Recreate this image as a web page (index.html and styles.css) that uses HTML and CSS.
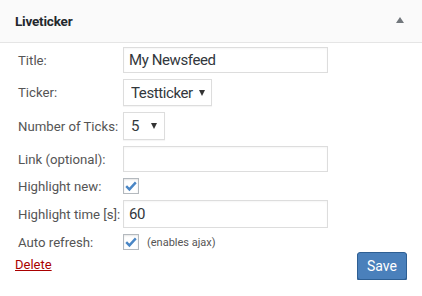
FILE: index.html
```html
<!DOCTYPE html>
<html lang="en">
<head>
  <meta charset="UTF-8">
  <meta name="viewport" content="width=device-width, initial-scale=1.0">
  <title>Liveticker Widget</title>
  <link rel="stylesheet" href="styles.css">
</head>
<body>
  <div class="widget">
    <div class="widget-top">
      <h3>Liveticker</h3>
      <span class="toggle"></span>
    </div>

    <form class="widget-inside">
      <div class="fields">
        <label for="title">Title:</label>
        <input type="text" id="title" class="wide" value="My Newsfeed">

        <label for="ticker">Ticker:</label>
        <span class="select-wrap ticker">
          <select id="ticker"><option>Testticker</option></select>
          <span class="arrow"></span>
        </span>

        <label for="limit">Number of Ticks:</label>
        <span class="select-wrap limit">
          <select id="limit"><option>5</option></select>
          <span class="arrow"></span>
        </span>

        <label for="link">Link (optional):</label>
        <input type="text" id="link" class="wide" value="">

        <label for="highlight">Highlight new:</label>
        <span class="check-row">
          <span class="checkbox"><svg viewBox="0 0 16 16" width="16" height="16"><path d="M3.2 8.2 L6.4 11.4 L12.8 4.4" fill="none" stroke="#4a86c5" stroke-width="2.4"/></svg></span>
        </span>

        <label for="htime">Highlight time [s]:</label>
        <input type="text" id="htime" class="wide tall" value="60">

        <label for="ajax">Auto refresh:</label>
        <span class="check-row">
          <span class="checkbox"><svg viewBox="0 0 16 16" width="16" height="16"><path d="M3.2 8.2 L6.4 11.4 L12.8 4.4" fill="none" stroke="#4a86c5" stroke-width="2.4"/></svg></span>
          <small>(enables ajax)</small>
        </span>
      </div>

      <div class="widget-control">
        <a href="#" class="delete">Delete</a>
        <button type="button" class="save">Save</button>
      </div>
    </form>
  </div>
</body>
</html>
```

FILE: styles.css
```css
body {
  margin: 0;
  font-family: Roboto, "Liberation Sans", Arial, sans-serif;
  background: #fff;
}
.widget {
  width: 422px;
}
.widget-top {
  display: flex;
  align-items: center;
  justify-content: space-between;
  height: 43px;
  padding: 0 18px 0 15px;
  background: #fafafa;
  border-bottom: 1px solid #e5e5e5;
  box-sizing: border-box;
}
.widget-top h3 {
  margin: 0;
  font-size: 13.5px;
  font-weight: bold;
  color: #23282d;
  letter-spacing: -0.2px;
}
.toggle {
  width: 0;
  height: 0;
  border-left: 4px solid transparent;
  border-right: 4px solid transparent;
  border-bottom: 6px solid #72777c;
  margin-top: -2px;
}
.widget-inside {
  padding: 4px 15px 0 18px;
}
.fields {
  display: grid;
  grid-template-columns: 105px auto;
  row-gap: 6px;
  align-items: center;
  justify-items: start;
}
.fields label {
  font-size: 13.2px;
  color: #555;
}
input.wide {
  width: 205px;
  height: 26px;
  box-sizing: border-box;
  margin: 0;
  padding: 0 5px;
  border: 1px solid #ddd;
  box-shadow: inset 0 1px 2px rgba(0, 0, 0, 0.04);
  font-family: inherit;
  font-size: 15px;
  letter-spacing: -0.4px;
  color: #32373c;
}
input.tall {
  height: 28px;
}
.select-wrap {
  position: relative;
  display: inline-block;
}
.select-wrap select {
  appearance: none;
  -webkit-appearance: none;
  height: 27px;
  margin: 0;
  padding: 0 7px;
  border: 1px solid #ddd;
  background: #fff;
  font-family: inherit;
  font-size: 15px;
  letter-spacing: -0.4px;
  color: #32373c;
  box-shadow: 0 1px 1px rgba(0, 0, 0, 0.04);
}
.ticker select {
  width: 89px;
}
.limit select {
  width: 42px;
  height: 28px;
}
.arrow {
  position: absolute;
  right: 8px;
  top: 11px;
  width: 0;
  height: 0;
  border-left: 3px solid transparent;
  border-right: 3px solid transparent;
  border-top: 6px solid #333;
}
.ticker .arrow {
  right: 7px;
}
.check-row {
  display: flex;
  align-items: center;
  gap: 8px;
  height: 16px;
}
.checkbox {
  display: block;
  width: 16px;
  height: 16px;
  border: 1px solid #b4b9be;
  box-sizing: border-box;
  background: #fff;
  box-shadow: inset 0 1px 2px rgba(0, 0, 0, 0.1);
}
.checkbox svg {
  display: block;
  margin: -1px 0 0 -1px;
}
.check-row small {
  font-size: 11px;
  color: #555;
}
.widget-control {
  display: flex;
  justify-content: space-between;
  align-items: flex-start;
  margin: 2px 0 0 -3px;
}
.delete {
  font-size: 13px;
  color: #a00;
  margin-top: 5px;
}
.save {
  width: 50px;
  height: 28px;
  padding: 0;
  border: 1px solid #2e5f93;
  border-radius: 3px;
  background: #4a80bb;
  color: #fff;
  font-family: inherit;
  font-size: 14px;
  box-shadow: 0 1px 0 #2e5f93;
}
```
